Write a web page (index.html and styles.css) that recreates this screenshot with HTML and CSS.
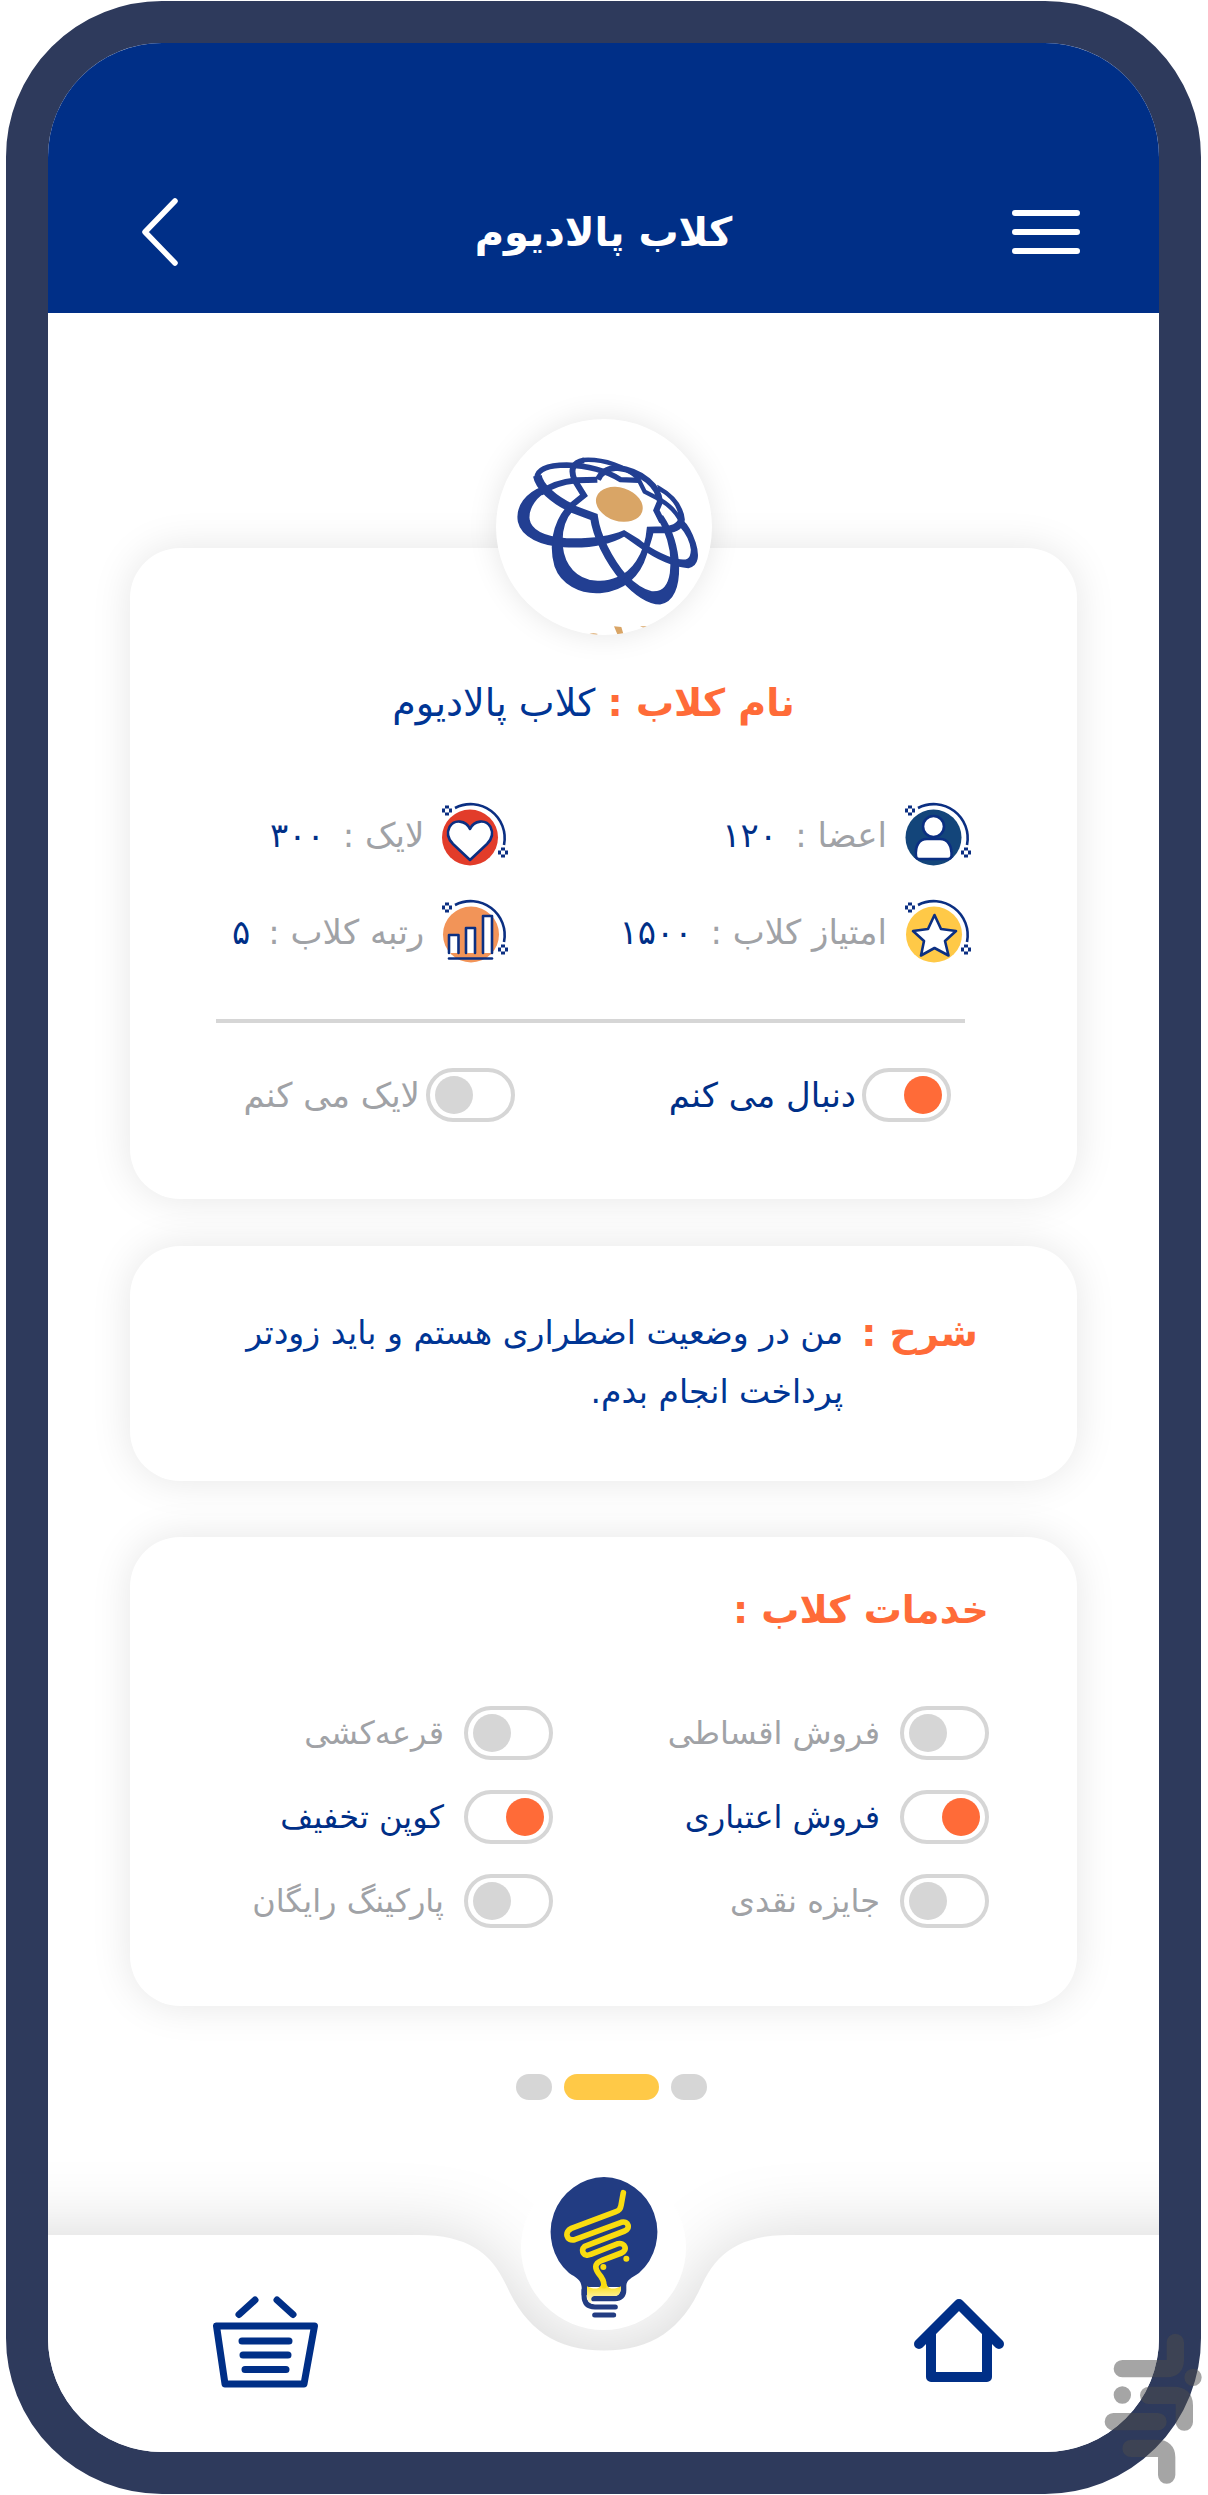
FILE: index.html
```html
<!DOCTYPE html>
<html lang="fa" dir="rtl">
<head>
<meta charset="utf-8">
<meta name="viewport" content="width=device-width, initial-scale=1">
<title>کلاب پالادیوم</title>
<link rel="stylesheet" href="styles.css">
</head>
<body>
<svg class="defs" width="0" height="0" aria-hidden="true">
  <defs>
    <g id="sparkle" fill="#0b2f82">
      <rect x="-2" y="-5" width="4" height="3"/><rect x="-2" y="2" width="4" height="3"/>
      <rect x="-5" y="-2" width="3" height="4"/><rect x="2" y="-2" width="3" height="4"/>
    </g>
    <g id="orbit">
      <path d="M13 6A34 34 0 0 1 62 43" fill="none" stroke="#0b2f82" stroke-width="2.6"/>
      <use href="#sparkle" x="5" y="8.500"/>
      <use href="#sparkle" x="61" y="50.500"/>
    </g>
  </defs>
</svg>

<div class="phone">
  <header class="topbar">
    <button class="icon-button menu" type="button" aria-label="منو">
      <svg width="68" height="44" viewBox="0 0 68 44" fill="none" stroke="#fff" stroke-width="6" stroke-linecap="round"><path d="M3 3H65M3 22H65M3 41H65"/></svg>
    </button>
    <h1 class="title">کلاب پالادیوم</h1>
    <button class="icon-button back" type="button" aria-label="بازگشت">
      <svg width="36" height="68" viewBox="0 0 36 68" fill="none" stroke="#fff" stroke-width="5.500" stroke-linecap="round" stroke-linejoin="round"><path d="M33 3L3 34L33 65"/></svg>
    </button>
  </header>

  <main class="content">
    <div class="avatar">
      <svg viewBox="48 58 648 648" fill="none" stroke="#223f92" stroke-linejoin="miter" role="img" aria-label="نشان کلاب">
        <ellipse cx="418" cy="314" rx="72" ry="50" transform="rotate(18 418 314)" fill="#d9a566" stroke="none"/>
        <path stroke-width="18" d="M352 240L290 242C240 247 205 262 182 280"/>
        <g fill="#223f92" stroke-width="5">
          <path d="M190 262C140 280 108 320 116 366C126 412 185 436 250 440C320 444 380 438 432 408L482 443C530 478 585 502 625 503C655 498 656 465 645 430C635 400 622 375 606 362L600 378C620 400 632 425 635 450C634 482 620 486 590 480C550 470 500 442 475 420L432 394C390 412 330 420 260 418C200 414 152 396 146 358C144 320 170 288 205 272Z"/>
          <path d="M262 322C220 370 208 440 226 500C244 552 300 582 360 578C435 572 480 525 498 465C508 435 516 410 518 398L560 398C590 396 610 385 612 360C608 320 580 285 535 260L538 272C575 292 596 322 598 350C598 372 580 380 555 382L503 384C500 425 488 460 470 486C440 532 390 550 345 545C290 540 252 500 246 440C242 390 255 355 278 330Z"/>
          <path d="M424 540C460 580 500 612 540 612C580 606 596 560 595 500C592 440 575 390 548 350L532 348L552 388C570 430 578 480 572 520C566 560 545 580 515 577C485 572 460 550 438 528Z"/>
        </g>
        <path stroke-width="24" d="M272 326L342 352C350 410 385 480 432 536"/>
        <path stroke-width="18" d="M546 366L529 332L540 306C536 262 490 214 410 204C378 206 362 220 354 240"/>
        <path stroke-width="26" d="M274 325C222 300 178 262 172 228"/>
        <path stroke-width="16" d="M170 236C172 206 205 196 260 196C330 198 380 214 422 240L476 242"/>
        <path stroke-width="18" d="M265 325L312 287L284 242C270 210 278 188 312 182"/>
        <path stroke-width="13" d="M308 181C370 176 440 202 474 236L494 276L540 300C565 315 592 340 604 368"/>
        <path fill="#d9a566" stroke="none" d="M402 680L424 682L430 702L412 704ZM480 680L502 680L494 686ZM328 703Q340 699 354 703L350 705Z"/>
      </svg>
    </div>

    <section class="card profile">
      <h2 class="club-name"><strong>نام کلاب :</strong> کلاب پالادیوم</h2>
      <dl class="stats">
        <div class="stat">
          <svg width="66" height="66" viewBox="0 0 66 66" aria-hidden="true">
            <circle cx="28.500" cy="35.500" r="28" fill="#13457a"/>
            <g fill="#fff" stroke="#0b2f82" stroke-width="2.600"><circle cx="28.500" cy="24.500" r="10.500"/><path d="M11 54C10 44 14 37 22 37H35C43 37 47 44 46.500 54Q46 57 43 57H14Q11 57 11 54Z"/></g>
            <use href="#orbit"/>
          </svg>
          <dt>اعضا :</dt><dd>۱۲۰</dd>
        </div>
        <div class="stat">
          <svg width="66" height="66" viewBox="0 0 66 66" aria-hidden="true">
            <circle cx="28" cy="35.500" r="28" fill="#e23c2a"/>
            <path d="M28 27C24 18 12 17 7.500 25C4 32 7 38 11 42L28 58L45 42C49 38 52 32 48.500 25C44 17 32 18 28 27Z" fill="#fff" stroke="#0b2f82" stroke-width="2.600" stroke-linejoin="round"/>
            <use href="#orbit"/>
          </svg>
          <dt>لایک :</dt><dd>۳۰۰</dd>
        </div>
        <div class="stat">
          <svg width="66" height="66" viewBox="0 0 66 66" aria-hidden="true">
            <circle cx="29" cy="35.500" r="28" fill="#ffc947"/>
            <path d="M29.500 16L36 30L51 32L40 42L43.500 56.500L29.500 49L16 56.500L19 42L8 32L23 30Z" fill="#fff" stroke="#0b2f82" stroke-width="2.600" stroke-linejoin="round"/>
            <use href="#orbit"/>
          </svg>
          <dt>امتیاز کلاب :</dt><dd>۱۵۰۰</dd>
        </div>
        <div class="stat">
          <svg width="66" height="66" viewBox="0 0 66 66" aria-hidden="true">
            <circle cx="29" cy="35.500" r="28" fill="#f29458"/>
            <g fill="#fff" stroke="#0b2f82" stroke-width="2.600" stroke-linejoin="round" stroke-linecap="round"><path d="M7 54V36H16.500V54M24 54V29H33V54M41 54V17H50V54"/><path d="M7 59.500H50"/></g>
            <use href="#orbit"/>
          </svg>
          <dt>رتبه کلاب :</dt><dd>۵</dd>
        </div>
      </dl>
      <hr class="divider">
      <div class="toggles actions">
        <div class="option"><input type="checkbox" class="switch" id="follow" checked><label for="follow">دنبال می کنم</label></div>
        <div class="option"><input type="checkbox" class="switch" id="like"><label for="like">لایک می کنم</label></div>
      </div>
    </section>

    <section class="card about">
      <h2 class="heading">شرح :</h2>
      <p class="about-text">من در وضعیت اضطراری هستم و باید زودتر پرداخت انجام بدم.</p>
    </section>

    <section class="card services">
      <h2 class="heading">خدمات کلاب :</h2>
      <div class="toggles service-list">
        <div class="option"><input type="checkbox" class="switch" id="installment"><label for="installment">فروش اقساطی</label></div>
        <div class="option"><input type="checkbox" class="switch" id="raffle"><label for="raffle">قرعه‌کشی</label></div>
        <div class="option"><input type="checkbox" class="switch" id="credit" checked><label for="credit">فروش اعتباری</label></div>
        <div class="option"><input type="checkbox" class="switch" id="coupon" checked><label for="coupon">کوپن تخفیف</label></div>
        <div class="option"><input type="checkbox" class="switch" id="prize"><label for="prize">جایزه نقدی</label></div>
        <div class="option"><input type="checkbox" class="switch" id="parking"><label for="parking">پارکینگ رایگان</label></div>
      </div>
    </section>

    <div class="pager"><span class="dot"></span><span class="dot current"></span><span class="dot"></span></div>
  </main>

  <nav class="tabbar">
    <svg class="wave" viewBox="0 0 1111 218" preserveAspectRatio="none" aria-hidden="true">
      <path fill="#fff" d="M-80 0H370C420 0 443 18 458 50C478 95 508 116 556 116C604 116 634 95 654 50C669 18 692 0 742 0H1191V218H-80Z"/>
    </svg>
    <a class="tab" href="#home" aria-label="خانه">
      <svg width="90" height="92" viewBox="0 0 90 92" fill="none" stroke="#002f87" stroke-width="10" stroke-linecap="round" stroke-linejoin="round"><path d="M5 48L45 8L85 48"/><path d="M17 37V81H73V37"/></svg>
    </a>
    <a class="hub" href="#club" aria-label="باشگاه">
      <svg width="112" height="144" viewBox="144 357 336 432" fill="none" stroke-linecap="round" stroke-linejoin="round">
        <defs><linearGradient id="glow" x1="0" y1="0" x2="0" y2="1"><stop offset="0" stop-color="#f9dc10"/><stop offset="1" stop-color="#fffbe0"/></linearGradient></defs>
        <path fill="#223c82" d="M312 360A165 165 0 0 1 417 648C395 663 380 668 379 685V700C379 720 366 733 345 733H281A8 8 0 0 1 281 717H345C358 715 363 705 363 690H261V715H245V690C243 668 228 662 207 648A165 165 0 0 1 312 360Z"/>
        <path stroke="#223c82" stroke-width="15" d="M252 700V715C252 738 262 750 285 750H346M284 774H341"/>
        <path fill="url(#glow)" d="M261 688C285 700 300 695 304 682H320C324 695 340 700 363 688C363 706 358 717 345 717H282C272 718 272 732 276 740Q261 735 261 718Z"/>
        <path stroke="#f9dc10" stroke-width="17" d="M370 407L363 446Q361 460 348 464L214 514C192 524 199 554 224 548L364 496C386 490 392 516 374 522L254 568C240 580 252 602 272 592L354 560C376 556 384 580 364 588L306 610C280 620 286 636 296 650Q312 668 312 686"/>
        <circle cx="310" cy="630" r="9" fill="#f9dc10"/><circle cx="379" cy="605" r="9" fill="#f9dc10"/>
      </svg>
    </a>
    <a class="tab cart" href="#cart" aria-label="سبد خرید">
      <svg width="105" height="92" viewBox="0 0 105 92" fill="none" stroke="#002f87" stroke-width="7" stroke-linecap="round" stroke-linejoin="round"><path d="M3.500 30H101.500L91 88H12ZM29 45H76M30 59H75M32 73.500H73M26 18.500L42 4M64 4L80 18.500"/></svg>
    </a>
  </nav>

  <svg class="watermark" width="98" height="152" viewBox="670 283 294 456" fill="none" aria-hidden="true">
    <g opacity=".5" stroke="#4b4b4b" stroke-width="52" stroke-linecap="round" stroke-linejoin="round">
      <path d="M884 311V365Q884 390 860 390H725M725 469H725.100M698 549H832M804 470H880Q911 470 911 500V550M751 629H830Q858 629 858 655V709M937 416H937.100"/>
    </g>
  </svg>
</div>
</body>
</html>
```
FILE: styles.css
```css
:root {
  --navy: #002f87;
  --ink: #003594;
  --orange: #ff6b38;
  --grey: #a0a2a6;
  --line: #d6d6d6;
  --frame: #2e3a5c;
}

* { box-sizing: border-box; }

body {
  margin: 0;
  background: #fff;
  font-family: "DejaVu Sans", sans-serif;
  color: var(--ink);
}

h1, h2, p, dl, dd { margin: 0; }

.defs { position: absolute; }

.phone {
  position: relative;
  margin: 1px 7px 0 6px;
  border: 42px solid var(--frame);
  border-radius: 156px;
  background: #fff;
}

.topbar {
  display: grid;
  grid-template-columns: 1fr auto 1fr;
  align-items: center;
  height: 270px;
  padding: 107px 79px 0;
  border-radius: 114px 114px 0 0;
  background: var(--navy);
  color: #fff;
}

.icon-button {
  display: flex;
  padding: 0;
  border: 0;
  background: none;
  cursor: pointer;
}

.menu { justify-self: start; }

.back {
  justify-self: end;
  margin-left: 15px;
}

.title {
  font-size: 40px;
  line-height: 60px;
}

.content { padding: 106px 82px 0; }

.avatar {
  position: relative;
  width: 216px;
  height: 216px;
  margin: 0 auto -87px;
  border-radius: 50%;
  background: #fff;
  box-shadow: 0 0 30px rgba(0, 0, 0, .1);
  overflow: hidden;
}

.avatar svg { display: block; }

.card {
  border-radius: 50px;
  background: #fff;
  box-shadow: 0 0 40px rgba(0, 0, 0, .1);
}

.profile { padding: 127px 106px 77px 86px; }

.club-name {
  font-size: 38px;
  font-weight: 400;
  line-height: 56px;
  text-align: center;
}

.club-name strong {
  color: var(--orange);
  line-height: 1;
}

.stats {
  display: grid;
  grid-template-columns: 19fr 12fr;
  row-gap: 31px;
  margin-top: 71px;
}

.stat {
  display: flex;
  align-items: center;
  gap: 18px;
  height: 66px;
  white-space: nowrap;
  font-size: 34px;
}

.stat dt { color: var(--grey); }
.stat dd { color: var(--navy); }

.divider {
  height: 4px;
  margin: 54px 6px 0 0;
  border: 0;
  background: var(--line);
}

.toggles {
  display: grid;
  grid-template-columns: 436px 1fr;
  white-space: nowrap;
}

.actions {
  margin-top: 45px;
  padding-right: 20px;
  font-size: 34px;
}

.option {
  display: flex;
  align-items: center;
  gap: 6px;
  color: var(--grey);
}

.switch {
  appearance: none;
  display: flex;
  align-items: center;
  justify-content: flex-end;
  flex: none;
  width: 89px;
  height: 54px;
  margin: 0;
  padding: 0 5px;
  border: 4px solid var(--line);
  border-radius: 27px;
  background: #fff;
  cursor: pointer;
}

.switch::before {
  content: "";
  width: 38px;
  height: 38px;
  border-radius: 50%;
  background: var(--line);
}

.switch:checked { justify-content: flex-start; }
.switch:checked::before { background: var(--orange); }
.switch:checked + label { color: var(--navy); }

.heading {
  color: var(--orange);
  font-size: 38px;
  line-height: 60px;
}

.about {
  display: flex;
  gap: 18px;
  margin-top: 47px;
  padding: 57px 99px 60px 105px;
}

.about .heading { flex: none; }

.about-text {
  font-size: 33px;
  line-height: 59px;
}

.services {
  margin-top: 56px;
  padding: 43px 88px 78px 86px;
}

.service-list {
  row-gap: 30px;
  margin-top: 66px;
  font-size: 32px;
}

.service-list .option { gap: 20px; }

.pager {
  display: flex;
  justify-content: center;
  gap: 12px;
  margin-top: 68px;
  padding-left: 16px;
}

.dot {
  width: 36px;
  height: 26px;
  border-radius: 13px;
  background: var(--line);
}

.current {
  width: 95px;
  background: #ffc947;
}

.tabbar {
  position: relative;
  display: grid;
  grid-template-columns: 1fr auto 1fr;
  height: 217px;
  margin-top: 135px;
  padding: 0 155px;
}

.wave {
  position: absolute;
  top: 0;
  left: 0;
  width: 100%;
  height: 100%;
  overflow: visible;
  filter: drop-shadow(0 0 36px rgba(0, 0, 0, .16));
  clip-path: inset(-140px 0 0 0 round 0 0 114px 114px);
}

.tab {
  position: relative;
  display: flex;
  align-self: start;
  margin-top: 61px;
}

.cart {
  justify-self: end;
  margin-left: 10px;
}

.hub {
  position: relative;
  display: flex;
  align-items: center;
  justify-content: center;
  width: 165px;
  height: 165px;
  margin-top: -70px;
  border-radius: 50%;
  background: #fff;
}

.watermark {
  position: absolute;
  right: -43px;
  bottom: -33px;
}
```
